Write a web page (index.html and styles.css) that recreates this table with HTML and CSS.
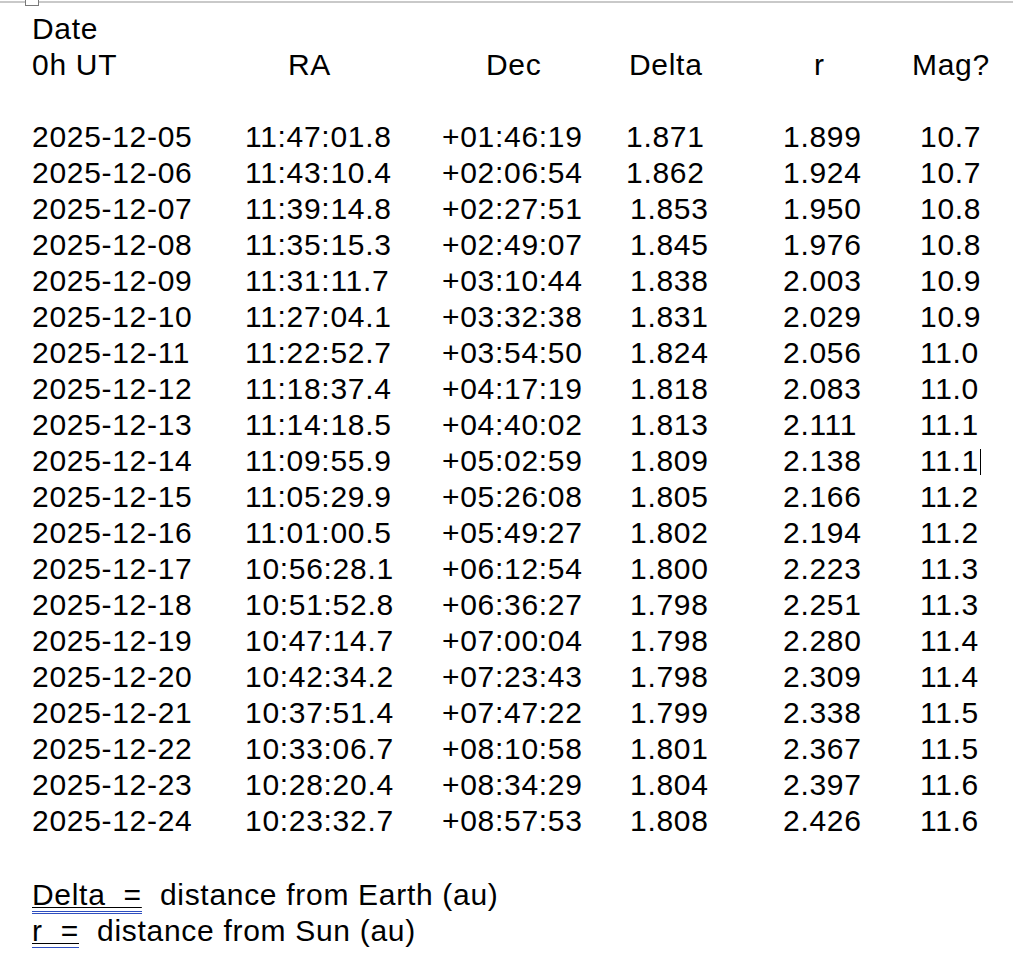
FILE: index.html
```html
<!DOCTYPE html>
<html>
<head>
<meta charset="utf-8">
<link rel="stylesheet" href="styles.css">
</head>
<body>
<div class="frame">
  <div class="handle"></div>
  <div class="doc">
    <div class="line">Date</div>
    <div class="hgrid">
      <span>0h UT</span><span>RA</span><span>Dec</span><span>Delta</span><span>r</span><span>Mag?</span>
    </div>
    <div class="line"></div>
    <div class="rows">
      <div class="row"><span>2025-12-05</span><span>11:47:01.8</span><span>+01:46:19</span><span class="nopad">1.871</span><span>1.899</span><span>10.7</span></div>
      <div class="row"><span>2025-12-06</span><span>11:43:10.4</span><span>+02:06:54</span><span class="nopad">1.862</span><span>1.924</span><span>10.7</span></div>
      <div class="row"><span>2025-12-07</span><span>11:39:14.8</span><span>+02:27:51</span><span>1.853</span><span>1.950</span><span>10.8</span></div>
      <div class="row"><span>2025-12-08</span><span>11:35:15.3</span><span>+02:49:07</span><span>1.845</span><span>1.976</span><span>10.8</span></div>
      <div class="row"><span>2025-12-09</span><span>11:31:11.7</span><span>+03:10:44</span><span>1.838</span><span>2.003</span><span>10.9</span></div>
      <div class="row"><span>2025-12-10</span><span>11:27:04.1</span><span>+03:32:38</span><span>1.831</span><span>2.029</span><span>10.9</span></div>
      <div class="row"><span>2025-12-11</span><span>11:22:52.7</span><span>+03:54:50</span><span>1.824</span><span>2.056</span><span>11.0</span></div>
      <div class="row"><span>2025-12-12</span><span>11:18:37.4</span><span>+04:17:19</span><span>1.818</span><span>2.083</span><span>11.0</span></div>
      <div class="row"><span>2025-12-13</span><span>11:14:18.5</span><span>+04:40:02</span><span>1.813</span><span>2.111</span><span>11.1</span></div>
      <div class="row"><span>2025-12-14</span><span>11:09:55.9</span><span>+05:02:59</span><span>1.809</span><span>2.138</span><span>11.1<i class="caret"></i></span></div>
      <div class="row"><span>2025-12-15</span><span>11:05:29.9</span><span>+05:26:08</span><span>1.805</span><span>2.166</span><span>11.2</span></div>
      <div class="row"><span>2025-12-16</span><span>11:01:00.5</span><span>+05:49:27</span><span>1.802</span><span>2.194</span><span>11.2</span></div>
      <div class="row"><span>2025-12-17</span><span>10:56:28.1</span><span>+06:12:54</span><span>1.800</span><span>2.223</span><span>11.3</span></div>
      <div class="row"><span>2025-12-18</span><span>10:51:52.8</span><span>+06:36:27</span><span>1.798</span><span>2.251</span><span>11.3</span></div>
      <div class="row"><span>2025-12-19</span><span>10:47:14.7</span><span>+07:00:04</span><span>1.798</span><span>2.280</span><span>11.4</span></div>
      <div class="row"><span>2025-12-20</span><span>10:42:34.2</span><span>+07:23:43</span><span>1.798</span><span>2.309</span><span>11.4</span></div>
      <div class="row"><span>2025-12-21</span><span>10:37:51.4</span><span>+07:47:22</span><span>1.799</span><span>2.338</span><span>11.5</span></div>
      <div class="row"><span>2025-12-22</span><span>10:33:06.7</span><span>+08:10:58</span><span>1.801</span><span>2.367</span><span>11.5</span></div>
      <div class="row"><span>2025-12-23</span><span>10:28:20.4</span><span>+08:34:29</span><span>1.804</span><span>2.397</span><span>11.6</span></div>
      <div class="row"><span>2025-12-24</span><span>10:23:32.7</span><span>+08:57:53</span><span>1.808</span><span>2.426</span><span>11.6</span></div>
    </div>
    <div class="line"></div>
    <div class="notes">
      <div class="line"><span class="term">Delta  =</span>  distance from Earth (au)</div>
      <div class="line"><span class="term">r  =</span>  distance from Sun (au)</div>
    </div>
  </div>
</div>
</body>
</html>
```
FILE: styles.css
```css
html, body {
  margin: 0;
  padding: 0;
  background: #ffffff;
}

body {
  font-family: "Liberation Sans", Arial, sans-serif;
  font-size: 30px;
  letter-spacing: 0.7px;
  color: #000000;
}

.frame {
  position: relative;
  margin-top: 1px;
  border-top: 2px solid #c9c9c9;
}

.handle {
  position: absolute;
  left: 25px;
  top: -10px;
  width: 12px;
  height: 11px;
  border: 1px solid #7a7a7a;
  background: #ffffff;
}

.doc {
  padding: 8px 0 0 32px;
}

.line {
  height: 36px;
  line-height: 36px;
  white-space: pre;
}

.hgrid,
.row {
  display: grid;
  height: 36px;
  line-height: 36px;
  white-space: pre;
}

.hgrid {
  grid-template-columns: 256px 198px 143px 185px 98px auto;
}

.row {
  grid-template-columns: 213px 197px 184px 157px 137px auto;
}

.row span:nth-child(4) {
  padding-left: 4px;
}

.row span.nopad {
  padding-left: 0;
}

.caret {
  display: inline-block;
  width: 1px;
  height: 26px;
  margin-left: 1px;
  vertical-align: -4px;
  background: #000000;
}

.notes {
  margin-top: 2px;
}

.term {
  text-decoration: underline;
  text-decoration-thickness: 1px;
  text-underline-offset: 2px;
  border-bottom: 3px double #2f4fc0;
}
```
